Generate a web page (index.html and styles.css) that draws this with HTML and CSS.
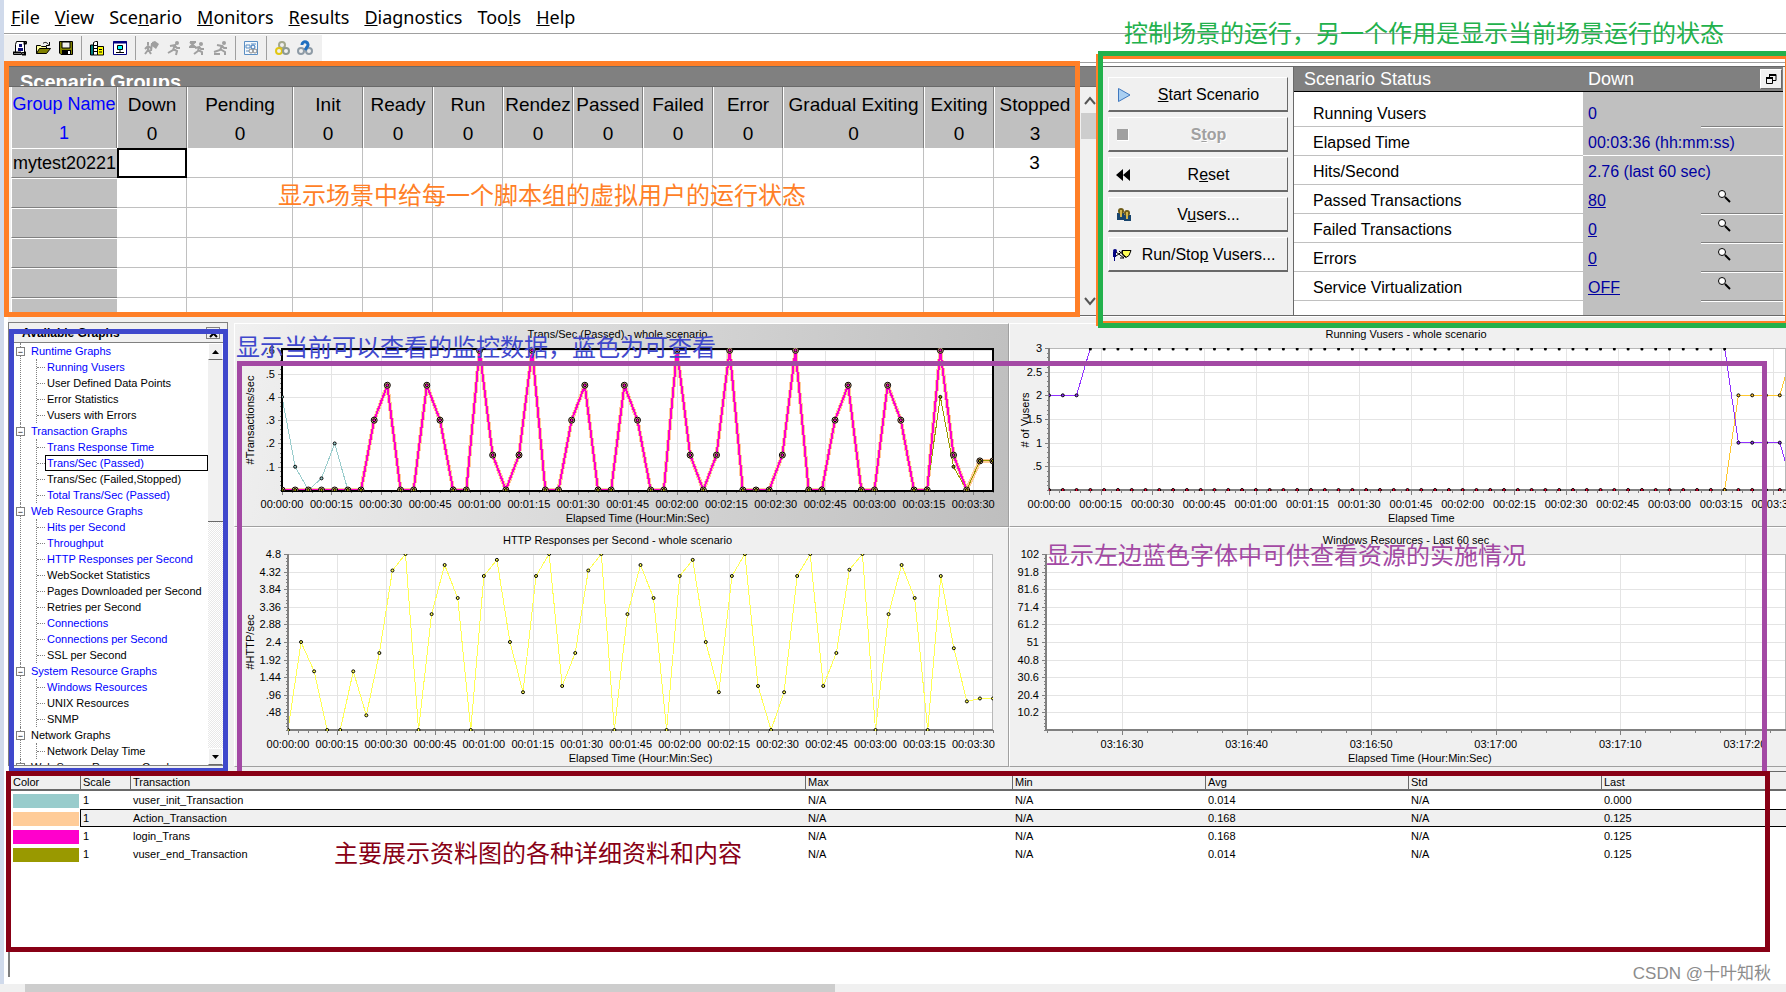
FILE: index.html
```html
<!DOCTYPE html>
<html lang="zh-CN">
<head>
<meta charset="utf-8">
<title>Controller - Scenario Run</title>
<link rel="stylesheet" href="styles.css">
</head>
<body>
<div class="app">
  <nav class="menu">
    <a href="#"><u>F</u>ile</a><a href="#"><u>V</u>iew</a><a href="#">Sce<u>n</u>ario</a><a href="#"><u>M</u>onitors</a><a href="#"><u>R</u>esults</a><a href="#"><u>D</u>iagnostics</a><a href="#">Too<u>l</u>s</a><a href="#"><u>H</u>elp</a>
  </nav>

  <div class="toolbar-row">
    <div class="toolbar">
      <button aria-label="New"><svg width="16" height="16"><path d="M4.500 1.500h10v2h-2v9h-3v2h-8v-2h2v-8z" fill="#fff" stroke="#000"/><path d="M1 12.500h8M10 14.500h3v-3M12.500 1.500v2h2" fill="none" stroke="#000" stroke-width="2"/><path d="M7 4h3v3h-3zM6 8h5v3H6z" fill="#101078"/></svg></button>
      <button aria-label="Open"><svg width="16" height="16"><path d="M1.500 13.500v-8h4l1 1h5v2" fill="#ffff99" stroke="#000"/><path d="M1.500 13.500l3-5h11l-4 5z" fill="#808000" stroke="#000"/><path d="M8 3.500c2-2 4-1 5.500 1M14.500 2v3.500H11" fill="none" stroke="#000"/></svg></button>
      <button aria-label="Save"><svg width="16" height="16"><path d="M1.500 1.500h13v13H3l-1.500-1.500z" fill="#808000" stroke="#000"/><path d="M4 2h8v6H4z" fill="#f0f0f0" stroke="#000"/><path d="M4 10h9v5H4z" fill="#000"/><path d="M10 11h2v3h-2z" fill="#fff"/></svg></button>
      <i class="sep"></i>
      <button aria-label="Load generators"><svg width="16" height="16"><path d="M4.500 15V2.500l2-1h2V15z" fill="#fff" stroke="#000"/><path d="M1.500 5v10h3V5z" fill="#008080" stroke="#000"/><path d="M5 5.500h3M5 8.500h3M5 11.500h3" stroke="#000"/><path d="M8.500 6.500h6v8.500h-6z" fill="#ffff00" stroke="#000"/><path d="M10 9.500h3M10 12h3" stroke="#000"/></svg></button>
      <button aria-label="Monitor"><svg width="16" height="16"><path d="M1.500 1.500h13v13h-13z" fill="#fff" stroke="#000080"/><path d="M1 2.500h14" stroke="#000080" stroke-width="2"/><path d="M5.500 5.500h5v4h-5z" fill="#00ffff" stroke="#000"/><path d="M8 10v2M4 12.500h8" stroke="#000"/></svg></button>
      <i class="sep"></i>
      <button disabled aria-label="Initialize"><svg width="16" height="16"><path d="M5 2v3M5 6v4l-3 4M5 9l3 5M2 9l3-3 4 3M9 3l-1 8" fill="none" stroke="#a0a0a0" stroke-width="2"/><path d="M9 2l3-1 4 3-3 5-4-3z" fill="#a0a0a0"/></svg></button>
      <button disabled aria-label="Run"><svg width="16" height="16"><circle cx="11" cy="3" r="2" fill="#a0a0a0"/><path d="M4 6l5-1-2 5-5 3M7 9l4 2-1 4M9 6l2 2h3" fill="none" stroke="#a0a0a0" stroke-width="2"/></svg></button>
      <button disabled aria-label="Renew"><svg width="16" height="16"><circle cx="12" cy="4" r="2" fill="#a0a0a0"/><path d="M1 2h6M1 2l5 5M6 2L1 7h6M6 8l4-1-1 4-4 3M9 10l4 2v3M10 7l2 2h3" fill="none" stroke="#a0a0a0" stroke-width="2"/></svg></button>
      <button disabled aria-label="Gradual stop"><svg width="16" height="16"><circle cx="12" cy="3" r="2" fill="#a0a0a0"/><path d="M5 5l5 1-2 4-6 2M8 9l5 3v3M10 6l2 2h3M2 14h6" fill="none" stroke="#a0a0a0" stroke-width="2"/></svg></button>
      <i class="sep"></i>
      <button aria-label="Results settings"><svg width="16" height="16"><path d="M1.500 1.500h13v13h-13z" fill="#f4f8fc" stroke="#5b8fc4"/><path d="M3 5h4v3H3zM8 4h5M3 11h3" fill="none" stroke="#5b8fc4"/><circle cx="10" cy="7" r="2" fill="none" stroke="#2d6fb8"/><circle cx="8" cy="11" r="2" fill="none" stroke="#8a8a8a"/><circle cx="12" cy="11" r="2" fill="none" stroke="#8a8a8a"/></svg></button>
      <i class="sep"></i>
      <button aria-label="Collate results"><svg width="16" height="16" fill="none" stroke-width="2"><circle cx="8" cy="5" r="3" stroke="#a3a88c"/><circle cx="5" cy="11" r="3" stroke="#e2c713"/><circle cx="12" cy="11" r="3" stroke="#8d9a93"/></svg></button>
      <button aria-label="Analyze results"><svg width="16" height="16" fill="none" stroke-width="2"><circle cx="4" cy="11" r="3" stroke="#8e9ba6"/><circle cx="12" cy="11" r="3" stroke="#8e9ba6"/><path d="M5 5a3 3 0 1 1 5 2L8 10" stroke="#1f6fc0" stroke-width="3"/></svg></button>
    </div>
  </div>

  <section class="top">
    <div class="groups">
      <h2>Scenario Groups</h2>
      <div class="groups-body">
        <div class="group-grid">
        <table class="group-table">
          <colgroup><col class="w106"><col class="w70"><col class="w106"><col class="w70"><col class="w70"><col class="w70"><col class="w70"><col class="w70"><col class="w70"><col class="w70"><col class="w141"><col class="w70"><col class="w82"></colgroup>
          <thead>
            <tr><th class="name blue">Group Name<br>1</th><th>Down<br>0</th><th>Pending<br>0</th><th>Init<br>0</th><th>Ready<br>0</th><th>Run<br>0</th><th>Rendez<br>0</th><th>Passed<br>0</th><th>Failed<br>0</th><th>Error<br>0</th><th>Gradual Exiting<br>0</th><th>Exiting<br>0</th><th>Stopped<br>3</th></tr>
          </thead>
          <tbody>
            <tr><th class="name">mytest20221</th><td class="cursor"></td><td></td><td></td><td></td><td></td><td></td><td></td><td></td><td></td><td></td><td></td><td>3</td></tr>
            <tr><th></th><td></td><td></td><td></td><td></td><td></td><td></td><td></td><td></td><td></td><td></td><td></td><td></td></tr>
            <tr><th></th><td></td><td></td><td></td><td></td><td></td><td></td><td></td><td></td><td></td><td></td><td></td><td></td></tr>
            <tr><th></th><td></td><td></td><td></td><td></td><td></td><td></td><td></td><td></td><td></td><td></td><td></td><td></td></tr>
            <tr><th></th><td></td><td></td><td></td><td></td><td></td><td></td><td></td><td></td><td></td><td></td><td></td><td></td></tr>
            <tr><th></th><td></td><td></td><td></td><td></td><td></td><td></td><td></td><td></td><td></td><td></td><td></td><td></td></tr>
          </tbody>
        </table>
        </div>
        <div class="vscroll">
          <button aria-label="Scroll up"><svg width="14" height="10"><path d="M2 8l5-6 5 6" fill="none" stroke="#555" stroke-width="2"/></svg></button>
          <div class="vthumb"></div>
          <button class="end" aria-label="Scroll down"><svg width="14" height="10"><path d="M2 2l5 6 5-6" fill="none" stroke="#555" stroke-width="2"/></svg></button>
        </div>
      </div>
    </div>

    <div class="run-panel">
      <div class="actions">
        <button><svg width="16" height="16"><path d="M2.500 1.500v13L14 8z" fill="#a9cff2" stroke="#3f78bf"/></svg><span><u>S</u>tart Scenario</span></button>
        <button disabled><svg width="16" height="16"><path d="M1 2h12v12H1z" fill="#fff"/><path d="M1 2h11v11H1z" fill="#a0a0a0"/></svg><span>S<u>t</u>op</span></button>
        <button><svg width="16" height="16"><path d="M7 2v12L0 8zM14 2v12L7 8z"/></svg><span>R<u>e</u>set</span></button>
        <button><svg width="16" height="16"><path d="M1 6h7v7H1zM8 8h7v6H8z" fill="#17446d"/><circle cx="5" cy="4" r="3" fill="#6e5c18"/><circle cx="11" cy="6" r="3" fill="#6e5c18"/><path d="M4 3h2v7H4zM10 5h2v7h-2z" fill="#d4b54a"/></svg><span>V<u>u</u>sers...</span></button>
        <button class="wide-icon"><svg width="19" height="16"><path d="M0 5h3v5H2v4H1v-4H0z" fill="#000080"/><circle cx="2" cy="4" r="2" fill="#000080"/><path d="M9 3.500h9l-2 5-3 2-3-2z" fill="#ffff55" stroke="#000"/><path d="M3 5l8 6M3 9l7-5M6 4l7 6M7 11h4" stroke="#000"/></svg><span>Run/Sto<u>p</u> Vusers...</span></button>
      </div>
      <div class="status">
        <div class="status-head"><span class="status-title">Scenario Status</span><span class="status-state">Down</span><button aria-label="Restore"><svg width="12" height="12"><path d="M4.500 1v5M4 1.500h7v6H8M1.500 4.500h6v6h-6z" fill="none" stroke="#000"/><path d="M4 2h7M1 5h7" stroke="#000" stroke-width="2"/></svg></button></div>
        <table class="status-table">
          <colgroup><col><col class="w118"><col class="w82"></colgroup>
          <tr><th>Running Vusers</th><td>0</td><td class="line"></td></tr>
          <tr><th>Elapsed Time</th><td class="light" colspan="2">00:03:36 (hh:mm:ss)</td></tr>
          <tr><th>Hits/Second</th><td colspan="2">2.76 (last 60 sec)</td></tr>
          <tr><th>Passed Transactions</th><td><a href="#">80</a></td><td class="line"><button aria-label="Passed details"><svg width="14" height="14"><circle cx="5" cy="5" r="3.500" fill="#fff" stroke="#000"/><path d="M8 8l5 5" stroke="#000" stroke-width="2"/></svg></button></td></tr>
          <tr><th>Failed Transactions</th><td><a href="#">0</a></td><td class="line"><button aria-label="Failed details"><svg width="14" height="14"><circle cx="5" cy="5" r="3.500" fill="#fff" stroke="#000"/><path d="M8 8l5 5" stroke="#000" stroke-width="2"/></svg></button></td></tr>
          <tr><th>Errors</th><td><a href="#">0</a></td><td class="line"><button aria-label="Error details"><svg width="14" height="14"><circle cx="5" cy="5" r="3.500" fill="#fff" stroke="#000"/><path d="M8 8l5 5" stroke="#000" stroke-width="2"/></svg></button></td></tr>
          <tr><th>Service Virtualization</th><td><a href="#">OFF</a></td><td class="line"><button aria-label="Virtualization details"><svg width="14" height="14"><circle cx="5" cy="5" r="3.500" fill="#fff" stroke="#000"/><path d="M8 8l5 5" stroke="#000" stroke-width="2"/></svg></button></td></tr>
        </table>
      </div>
    </div>
  </section>

  <section class="middle">
    <aside class="tree-panel">
      <header><b>Available Graphs</b><button aria-label="Close"><svg width="9" height="9"><path d="M1 1l7 7M8 1L1 8" stroke="#000" stroke-width="2"/></svg></button></header>
      <div class="tree-body">
        <ul class="tree">
          <li><button>−</button><a class="on" href="#">Runtime Graphs</a>
            <ul><li><a class="on" href="#">Running Vusers</a></li><li><a href="#">User Defined Data Points</a></li><li><a href="#">Error Statistics</a></li><li><a href="#">Vusers with Errors</a></li></ul></li>
          <li><button>−</button><a class="on" href="#">Transaction Graphs</a>
            <ul><li><a class="on" href="#">Trans Response Time</a></li><li><a class="on selected" href="#">Trans/Sec (Passed)</a></li><li><a href="#">Trans/Sec (Failed,Stopped)</a></li><li><a class="on" href="#">Total Trans/Sec (Passed)</a></li></ul></li>
          <li><button>−</button><a class="on" href="#">Web Resource Graphs</a>
            <ul><li><a class="on" href="#">Hits per Second</a></li><li><a class="on" href="#">Throughput</a></li><li><a class="on" href="#">HTTP Responses per Second</a></li><li><a href="#">WebSocket Statistics</a></li><li><a href="#">Pages Downloaded per Second</a></li><li><a href="#">Retries per Second</a></li><li><a class="on" href="#">Connections</a></li><li><a class="on" href="#">Connections per Second</a></li><li><a href="#">SSL per Second</a></li></ul></li>
          <li><button>−</button><a class="on" href="#">System Resource Graphs</a>
            <ul><li><a class="on" href="#">Windows Resources</a></li><li><a href="#">UNIX Resources</a></li><li><a href="#">SNMP</a></li></ul></li>
          <li><button>−</button><a href="#">Network Graphs</a>
            <ul><li><a href="#">Network Delay Time</a></li></ul></li>
          <li><button>−</button><a href="#">Web Server Resource Graphs</a></li>
        </ul>
        <div class="classic-scroll">
          <button aria-label="Up"><svg width="7" height="4"><path d="M0 4l3.500-4L7 4z"/></svg></button>
          <div class="classic-thumb"></div>
          <button class="end" aria-label="Down"><svg width="7" height="4"><path d="M0 0l3.500 4L7 0z"/></svg></button>
        </div>
      </div>
    </aside>
    <div class="charts">
      <figure class="chart short active" id="trans"></figure>
      <figure class="chart short" id="vusers"></figure>
      <figure class="chart tall" id="http"></figure>
      <figure class="chart tall" id="windows"></figure>
    </div>
  </section>

  <section class="legend">
    <table>
      <colgroup><col class="l70"><col class="l50"><col class="l675"><col class="l207"><col class="l193"><col class="l203"><col class="l193"><col class="l185"></colgroup>
      <thead><tr><th>Color</th><th>Scale</th><th>Transaction</th><th>Max</th><th>Min</th><th>Avg</th><th>Std</th><th>Last</th></tr></thead>
      <tbody>
        <tr><td><i class="swatch teal"></i></td><td>1</td><td>vuser_init_Transaction</td><td>N/A</td><td>N/A</td><td>0.014</td><td>N/A</td><td>0.000</td></tr>
        <tr class="picked"><td><i class="swatch peach"></i></td><td>1</td><td>Action_Transaction</td><td>N/A</td><td>N/A</td><td>0.168</td><td>N/A</td><td>0.125</td></tr>
        <tr><td><i class="swatch magenta"></i></td><td>1</td><td>login_Trans</td><td>N/A</td><td>N/A</td><td>0.168</td><td>N/A</td><td>0.125</td></tr>
        <tr><td><i class="swatch olive"></i></td><td>1</td><td>vuser_end_Transaction</td><td>N/A</td><td>N/A</td><td>0.014</td><td>N/A</td><td>0.125</td></tr>
      </tbody>
    </table>
  </section>
  <div class="hscroll"><div class="hthumb"></div></div>

  <div class="frame frame-groups"></div>
  <div class="frame frame-run-back"></div>
  <div class="frame frame-run"></div>
  <div class="frame frame-tree"></div>
  <div class="frame frame-charts"></div>
  <div class="frame frame-legend"></div>
  <p class="note note-groups">显示场景中给每一个脚本组的虚拟用户的运行状态</p>
  <p class="note note-run">控制场景的运行，另一个作用是显示当前场景运行的状态</p>
  <p class="note note-tree">显示当前可以查看的监控数据，蓝色为可查看</p>
  <p class="note note-charts">显示左边蓝色字体中可供查看资源的实施情况</p>
  <p class="note note-legend">主要展示资料图的各种详细资料和内容</p>
  <p class="watermark">CSDN @十叶知秋</p>
</div>
<script src="charts.js"></script>
</body>
</html>
```
FILE: styles.css
```css
* { box-sizing: border-box; }
body {
  margin: 0;
  background: #fff;
  color: #000;
  font-family: "Liberation Sans", "Noto Sans CJK SC", sans-serif;
  font-size: 11px;
  overflow: hidden;
}
a { color: inherit; text-decoration: none; }
button { font: inherit; color: inherit; padding: 0; border: 0; background: none; }
svg { display: block; }
table { border-collapse: separate; border-spacing: 0; table-layout: fixed; width: 100%; }
th { font-weight: normal; }

.app {
  position: relative;
  display: flex;
  flex-direction: column;
  min-height: 100vh;
  border-left: 4px solid #d0daeb;
}

/* menu and toolbar */
.menu {
  display: flex;
  gap: 15px;
  height: 34px;
  padding: 0 7px;
  align-items: center;
  border-bottom: 1px solid #a0a0a0;
  font-family: "Noto Sans", "Open Sans", sans-serif;
  font-size: 18px;
  line-height: 24px;
}
.toolbar-row { display: flex; height: 29px; border-bottom: 1px solid #a0a0a0; }
.toolbar {
  display: flex;
  align-items: center;
  gap: 7px;
  padding: 0 9px 2px 8px;
  margin-top: 1px;
  background: #f0f0f0;
}
.sep { width: 1px; height: 24px; background: #a0a0a0; }

/* scenario groups */
.top {
  display: flex;
  height: 250px;
  margin-top: 3px;
  border-top: 1px solid #696969;
  border-bottom: 1px solid #696969;
  background: #f0f0f0;
}
.groups { flex: 1; min-width: 0; display: flex; flex-direction: column; margin-left: 5px; }
.groups h2 {
  height: 20px;
  margin: 0;
  padding: 3px 11px 0;
  overflow: hidden;
  background: #808080;
  color: #fff;
  font-size: 20px;
  line-height: 24px;
  border-bottom: 1px solid #696969;
}
.groups-body { display: flex; flex: 1; min-height: 0; overflow: hidden; }
.group-grid { flex: 1; min-width: 0; margin-left: 2px; }
.group-table { font-size: 19px; text-align: center; background: #fff; }
.group-table th, .group-table td { height: 30px; padding: 0; overflow: hidden; white-space: nowrap; line-height: 29px; }
.group-table td { border-right: 1px solid #c0c0c0; border-bottom: 1px solid #c0c0c0; }
.group-table th { background: #c0c0c0; border-left: 1px solid #fff; border-right: 1px solid #808080; }
.group-table thead th { height: 61px; padding-top: 2px; border-bottom: 0; }
.group-table tbody th { border-top: 1px solid #fff; border-bottom: 1px solid #808080; border-right: 0; line-height: 28px; }
.group-table th.name { font-size: 18px; }
.group-table td.cursor { border: 2px solid #000; }
.blue { color: #00f; }
.w106 { width: 106px; } .w70 { width: 70px; } .w141 { width: 141px; } .w82 { width: 82px; } .w118 { width: 118px; }
.vscroll { display: flex; flex-direction: column; width: 23px; padding: 0 0 2px 6px; }
.vscroll button { height: 26px; padding: 2px 0 0 2px; }
.vthumb { height: 26px; background: #cdcdcd; }
.end { margin-top: auto; }

/* run controls and status */
.run-panel { display: flex; width: 688px; padding: 0 3px 0 10px; }
.actions { display: flex; flex-direction: column; gap: 5px; width: 180px; padding-top: 10px; font-size: 16px; }
.actions button {
  display: flex;
  align-items: center;
  height: 35px;
  padding: 2px 2px 0 7px;
  border: 1px solid #fff;
  border-right-color: #696969;
  border-bottom: 2px solid #696969;
}
.actions .wide-icon { padding-left: 4px; }
.actions span { flex: 1; text-align: center; white-space: nowrap; }
.actions button:disabled { color: #a0a0a0; font-weight: bold; text-shadow: 1px 1px #fff; }
.status { flex: 1; margin-left: 5px; border-left: 1px solid #696969; background: linear-gradient(#c0c0c0, #c0c0c0) right / 200px 100% no-repeat #fff; }
.status-head { display: flex; height: 25px; align-items: center; padding: 0 1px 0 10px; background: #808080; border-bottom: 1px solid #000; color: #fff; font-size: 18px; }
.status-title { flex: 1; }
.status-state { width: 172px; }
.status-head button { display: grid; place-items: center; width: 22px; height: 20px; background: #f0f0f0; border: 1px solid #fff; border-right-color: #696969; border-bottom-color: #696969; }
.status-table { margin-top: 6px; font-size: 16px; }
.status-table th, .status-table td { height: 29px; padding: 4px 0 0; line-height: 20px; text-align: left; white-space: nowrap; border-bottom: 1px solid transparent; }
.status-table th { padding-left: 19px; border-bottom-color: #c0c0c0; }
.status-table td { padding-left: 5px; color: #0000a0; }
.status-table a { text-decoration: underline; }
.status-table td.line { padding: 0 0 3px 16px; border-bottom-color: #808080; box-shadow: 0 1px #fff; }
.status-table td.light { border-bottom-color: #fff; }

/* available graphs tree */
.middle { display: flex; height: 455px; margin-left: 4px; padding-bottom: 3px; background: #f0f0f0; box-shadow: inset 0 1px #fff; }
.tree-panel { width: 220px; margin: 6px 0 2px; border: 1px solid #808080; display: flex; flex-direction: column; }
.tree-panel header { display: flex; justify-content: space-between; height: 20px; padding: 4px 7px 0 13px; border-bottom: 1px solid #808080; font-size: 12px; line-height: 12px; }
.tree-panel header button { display: grid; place-items: center; width: 14px; height: 12px; border: 1px solid #808080; }
.tree-body { display: flex; flex: 1; min-height: 0; margin: 0 4px 0 5px; overflow: hidden; background: #fff; }
.tree, .tree ul { list-style: none; margin: 0; padding: 0; }
.tree { flex: 1; min-width: 0; line-height: 16px; white-space: nowrap; padding-left: 6px; }
.tree > li { position: relative; border-left: 1px dotted #808080; padding-left: 10px; }
.tree > li > button { position: absolute; left: -5px; top: 4px; width: 9px; height: 9px; background: #fff; border: 1px solid #808080; font-size: 9px; line-height: 6px; }
.tree ul { margin-left: 5px; border-left: 1px dotted #808080; }
.tree ul li { display: flex; align-items: center; height: 16px; }
.tree ul li::before { content: ""; width: 8px; border-top: 1px dotted #808080; }
.tree ul a { flex: 1; padding-left: 1px; line-height: 14px; border: 1px solid transparent; }
.tree .on { color: #00f; }
.tree ul a.selected { border-color: #000; }
.classic-scroll { display: flex; flex-direction: column; width: 15px; background: repeating-conic-gradient(#fff 0 25%, #e8e8e8 0 50%) 0 0 / 2px 2px; }
.classic-scroll button { display: grid; place-items: center; height: 17px; background: #f0f0f0; border: 1px solid #fff; border-bottom-color: #696969; }
.classic-thumb { height: 162px; background: #f0f0f0; border-bottom: 1px solid #696969; }

/* charts */
.charts { flex: 1; min-width: 0; display: grid; grid-template-columns: calc(50% - 1px) 1fr; align-content: start; margin: 7px 0 0 6px; }
.chart { margin: 0; min-width: 0; overflow: hidden; border: 1px solid #a0a0a0; border-left-color: #fff; border-top-color: #fff; }
.chart:nth-child(even) { border-right: 0; }
.short { height: 204px; }
.tall { height: 240px; }
.active { background: linear-gradient(100deg, #f0f0f0, #bebebe); }
.chart text { font-size: 11px; text-anchor: middle; dominant-baseline: central; }
.chart text.y-label { text-anchor: end; }
.chart .grid { stroke: #e4e4e4; stroke-width: 1; }
.chart .tick { stroke: #808080; }
.crisp { shape-rendering: crispEdges; }

/* measurement list */
.legend { flex: 1; margin: 0 0 7px 4px; border-left: 2px solid #808080; }
.legend th, .legend td { height: 18px; padding: 0 3px; text-align: left; line-height: 14px; white-space: nowrap; }
.legend th { height: 20px; padding-top: 3px; background: #f0f0f0; border-left: 1px solid #696969; border-bottom: 2px solid #696969; border-top: 1px solid #696969; }
.legend th:first-child { border-left: 0; }
.legend th + th { padding-left: 2px; }
.legend td + td { padding-left: 3px; }
.legend .picked td + td { background: #f0f0f0; border: solid #000; border-width: 1px 0; }
.legend .picked td:nth-child(2) { border-left-width: 1px; padding-left: 2px; }
.swatch { display: block; height: 14px; margin: 2px -2px 0 0; }
.teal { background: #99cccc; } .peach { background: #ffcc99; } .magenta { background: #ff00cc; } .olive { background: #999900; }
.l70 { width: 70px; } .l50 { width: 50px; } .l675 { width: 675px; } .l207 { width: 207px; } .l193 { width: 193px; } .l203 { width: 203px; } .l185 { width: 185px; }

.hscroll { height: 8px; margin-left: -4px; padding-left: 25px; background: #f0f0f0; }
.hthumb { width: 46%; height: 8px; background: #cdcdcd; }

/* annotations drawn over the window */
.frame { position: absolute; border: 5px solid; pointer-events: none; }
.frame-groups { left: 0; right: 706px; top: 61px; height: 256px; border-color: #ff7f27; }
.frame-run-back { width: 690px; right: 0; top: 54px; height: 272px; border-color: #ff7f27; border-right-width: 1px; }
.frame-run { width: 688px; right: 0; top: 51px; height: 277px; border-color: #22b14c; border-right-width: 0; }
.frame-tree { left: 5px; width: 219px; top: 329px; height: 444px; border-color: #3f48cc; }
.frame-charts { left: 233px; right: 19px; top: 361px; height: 415px; border-color: #a349a4; }
.frame-legend { left: 2px; right: 16px; top: 771px; height: 181px; border-color: #880015; }
.note { position: absolute; margin: 0; font-family: "Noto Sans CJK SC", sans-serif; font-size: 24px; line-height: 32px; white-space: nowrap; }
.note-groups { left: 274px; top: 178px; color: #ff7f27; }
.note-run { right: 62px; top: 16px; color: #22b14c; }
.note-tree { left: 232px; top: 330px; color: #3f48cc; }
.note-charts { left: 1042px; top: 538px; color: #a349a4; }
.note-legend { left: 330px; top: 836px; color: #880015; }
.watermark { position: absolute; right: 15px; bottom: 6px; margin: 0; font-size: 17px; line-height: 24px; color: #8c8c8c; text-shadow: 1px 1px #fff; }
```
FILE: charts.js
```js
const NS = "http://www.w3.org/2000/svg";

function add(parent, name, attrs, text) {
  const node = document.createElementNS(NS, name);
  for (const key in attrs) node.setAttribute(key, attrs[key]);
  if (text !== undefined) node.textContent = text;
  parent.appendChild(node);
  return node;
}

const clock = s => "00:" + String(Math.floor(s / 60)).padStart(2, "0") + ":" + String(s % 60).padStart(2, "0");
const quarterMinutes = Array.from({ length: 15 }, (_, i) => [i * 15, clock(i * 15)]);
const zeros = n => Array(n).fill(0);

const passed = [0,0,0,0,0,0,0,.3,.45,0,0,.45,.3,0,0,.6,.15,0,.15,.6,0,0,.3,.45,0,0,.45,.3,0,0,.6,.15,0,.15,.6,0,0,0,.15,.6,0,0,.3,.45,0,0,.45,.3,0,0,.6,.15,0,.125,.125];
const loginTrans = passed.slice(0, 53);
const endTrans = zeros(50).concat([.4, .1, 0, .125, .125]);
const initTrans = [.4, .1, 0, .05, .2, 0].concat(zeros(47));
const running = [2, 2, 2].concat(Array(47).fill(3), [1, 1, 1, 1, 0]);
const finished = zeros(50).concat([2, 2, 2, 2, 3]);
const http = [0,2.4,1.6,0,0,1.6,.4,2.1,4.35,4.8,0,3.16,4.5,3.6,0,4.2,4.64,2.4,1.03,4.2,4.8,1.2,2.1,4.35,4.8,0,3.16,4.5,3.6,0,4.2,4.64,2.4,1.03,4.2,4.8,1.2,0,1.03,4.2,4.8,1.2,2.1,4.37,4.8,0,3.16,4.5,3.6,0,4.2,2.23,.78,.86,.86];

const charts = [
  { id: "trans", title: "Trans/Sec (Passed) - whole scenario", yTitle: "#Transactions/sec", xTitle: "Elapsed Time (Hour:Min:Sec)",
    height: 202, left: 47, right: 15, top: 24, bottom: 166, titleAt: 10, yTitleAt: 96, max: .61, span: 216, minor: 3, full: 216, titleShift: -4,
    yTicks: [[.1,".1"],[.2,".2"],[.3,".3"],[.4,".4"],[.5,".5"],[.6,".6"]], xTicks: quarterMinutes, frame: true,
    series: [
      { data: initTrans, color: "#99cccc", dots: true },
      { data: passed, color: "#ffcc99", width: 4, big: true },
      { data: endTrans, color: "#999900", dots: true },
      { data: loginTrans, color: "#ff00cc", width: 2 }
    ] },
  { id: "vusers", title: "Running Vusers - whole scenario", yTitle: "# of Vusers", xTitle: "Elapsed Time",
    height: 202, left: 39, right: 0, top: 24, bottom: 166, titleAt: 10, yTitleAt: 96, max: 3, span: 213.8, minor: 3, full: 216, titleShift: 8,
    yTicks: [[.5,".5"],[1,"1"],[1.5,"1.5"],[2,"2"],[2.5,"2.5"],[3,"3"]], xTicks: quarterMinutes, topLine: true,
    series: [
      { data: zeros(55), color: "#ff0033", dots: true },
      { data: finished, color: "#ffc830", dots: true, from: 49 },
      { data: running, color: "#9030ff", dots: true }
    ] },
  { id: "http", title: "HTTP Responses per Second - whole scenario", yTitle: "#HTTP/sec", xTitle: "Elapsed Time (Hour:Min:Sec)",
    height: 238, left: 53, right: 15, top: 26, bottom: 202, titleAt: 12, yTitleAt: 114, max: 4.8, span: 216, minor: 3, full: 216, titleShift: -4,
    yTicks: [.48,.96,1.44,1.92,2.4,2.88,3.36,3.84,4.32,4.8].map(v => [v, String(v).replace(/^0/, "")]), xTicks: quarterMinutes,
    series: [{ data: http, color: "#ffff55", dots: true }] },
  { id: "windows", title: "Windows Resources - Last 60 sec", yTitle: "", xTitle: "Elapsed Time (Hour:Min:Sec)",
    height: 238, left: 36, right: 0, top: 26, bottom: 202, titleAt: 12, yTitleAt: 114, max: 102, span: 59.4, minor: 2, full: 60, titleShift: 8,
    yTicks: [10.2,20.4,30.6,40.8,51,61.2,71.4,81.6,91.8,102].map(v => [v, String(v)]),
    xTicks: [[6.1,"03:16:30"],[16.1,"03:16:40"],[26.1,"03:16:50"],[36.1,"03:17:00"],[46.1,"03:17:10"],[56.1,"03:17:20"]],
    series: [] }
];

function draw(c) {
  const host = document.getElementById(c.id);
  host.textContent = "";
  const width = host.clientWidth;
  const svg = add(host, "svg", { width, height: c.height });
  const x0 = c.left, x1 = width - c.right;
  const px = t => x0 + t * (x1 - x0) / c.span;
  const py = v => c.bottom - v * (c.bottom - c.top) / c.max;
  const mid = v => Math.round(v) + .5;

  add(svg, "rect", { x: x0, y: c.top, width: x1 - x0, height: c.bottom - c.top, fill: "#fff" });
  const lines = add(svg, "g", { class: "crisp" });
  const line = (a, b, d, e, cls) => add(lines, "line", { x1: a, y1: b, x2: d, y2: e, class: cls });
  c.yTicks.forEach(([v]) => {
    line(x0, mid(py(v)), x1, mid(py(v)), "grid");
    line(x0 - 4, mid(py(v)), x0, mid(py(v)), "tick");
  });
  const step = c.yTicks[0][0] / 5;
  for (let v = 0; v <= c.max; v += step) line(x0 - 2, mid(py(v)), x0, mid(py(v)), "tick");
  c.xTicks.forEach(([t]) => {
    line(mid(px(t)), c.top, mid(px(t)), c.bottom, "grid");
    line(mid(px(t)), c.bottom, mid(px(t)), c.bottom + 5, "tick");
  });
  for (let t = c.xTicks[0][0] % c.minor; t <= c.span; t += c.minor) line(mid(px(t)), c.bottom, mid(px(t)), c.bottom + 3, "tick");

  const clip = add(svg, "clipPath", { id: c.id + "-clip" });
  add(clip, "rect", { x: x0, y: c.top, width: x1 - x0, height: c.bottom - c.top + 1 });
  const plot = add(svg, "g", { "clip-path": `url(#${c.id}-clip)` });
  c.series.forEach(s => {
    const from = s.from || 0;
    const pts = s.data.map((v, i) => [px(i * 4), py(v)]).slice(from);
    add(plot, "polyline", { points: pts.map(p => p.join()).join(" "), fill: "none", stroke: s.color, "stroke-width": s.width || 1, class: "crisp" });
  });

  const border = add(svg, "g", { class: "crisp" });
  if (c.frame) {
    add(border, "rect", { x: x0, y: c.top + 1, width: x1 - x0, height: c.bottom - c.top, fill: "none", stroke: "#000", "stroke-width": 2 });
  } else {
    add(border, "path", { d: `M${x0} ${c.top + .5}H${x1 - .5}V${c.bottom}`, fill: "none", stroke: "#b8b8b8" });
    add(border, "path", { d: `M${x0} ${c.top}V${c.bottom}H${x1}`, fill: "none", stroke: "#808080", "stroke-width": 2 });
  }

  const marks = add(svg, "g", { "clip-path": `url(#${c.id}-clip)` });
  c.series.forEach(s => {
    s.data.forEach((v, i) => {
      if (i < (s.from || 0)) return;
      if (s.big) {
        add(marks, "circle", { cx: px(i * 4), cy: py(v), r: 3, fill: s.color, stroke: "#000" });
        add(marks, "circle", { cx: px(i * 4), cy: py(v), r: 1.5, fill: v ? "#ff00cc" : "#999900", stroke: "#000" });
      } else if (c.topLine && (v === 3 || v === 0)) {
        add(marks, "circle", { cx: px(i * 4), cy: v ? py(v) + 1 : py(v), r: 1.5, fill: v ? "#000" : s.color, stroke: v ? "none" : "#000" });
      } else if (s.dots && (v || !c.frame)) {
        add(marks, "circle", { cx: px(i * 4), cy: py(v), r: 1.5, fill: s.color, stroke: "#000" });
      }
    });
  });

  c.yTicks.forEach(([v, label]) => add(svg, "text", { x: x0 - 7, y: py(v), class: "y-label" }, label));
  c.xTicks.forEach(([t, label]) => add(svg, "text", { x: px(t), y: c.bottom + 14 }, label));
  add(svg, "text", { x: width / 2 + c.titleShift, y: c.titleAt }, c.title);
  add(svg, "text", { x: (x0 + px(c.full)) / 2, y: c.bottom + 28 }, c.xTitle);
  if (c.yTitle) add(svg, "text", { transform: `translate(15 ${c.yTitleAt}) rotate(-90)` }, c.yTitle);
}

const drawAll = () => charts.forEach(draw);
drawAll();
window.addEventListener("resize", drawAll);
```
